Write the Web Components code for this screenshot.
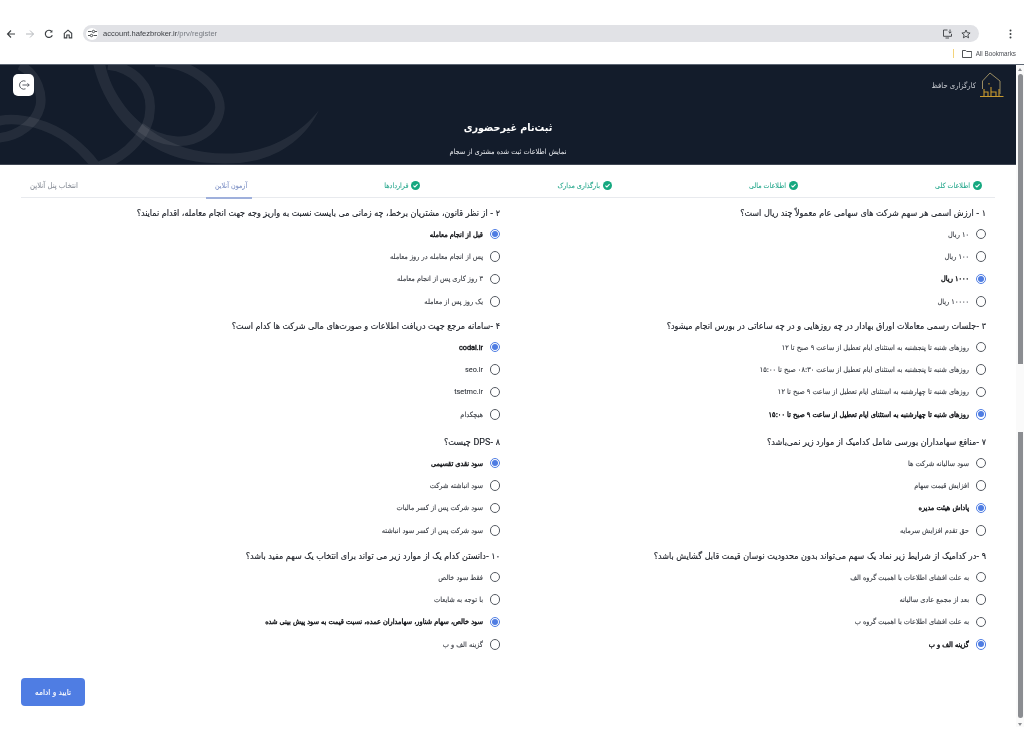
<!DOCTYPE html>
<html lang="fa"><head><meta charset="utf-8"><title>ثبت‌نام غیرحضوری</title>
<style>
html,body{margin:0;padding:0;background:#fff;overflow:hidden}
body{width:1024px;height:747px;font-family:"DejaVu Sans Condensed","DejaVu Sans","Noto Sans",sans-serif;font-stretch:condensed;color:#1f2533}
main{width:1016px;will-change:transform}
.l{font-family:Roboto,"Liberation Sans",sans-serif;font-stretch:normal}
</style></head><body>
<template id="t-chrome"><style>
:host{display:block;height:64px;border-bottom:1px solid #5d6673;font-family:"Liberation Sans",sans-serif;font-stretch:normal;position:relative;will-change:transform}
.row{display:flex;align-items:center;height:17px;padding:25px 0 0 6px;gap:9px}
.row svg{flex:none}
.url{flex:none;width:896px;height:17px;margin-left:1px;background:#e1e2e6;border-radius:9px;display:flex;align-items:center;box-sizing:border-box;padding:0 8px 0 3px;font-size:7.55px;color:#3a3d42}
.tune{width:12px;height:12px;border-radius:50%;background:#fff;display:flex;align-items:center;justify-content:center;margin-right:5px}
.url span i{font-style:normal;color:#777b82}
.end{margin-inline-start:auto;display:flex;gap:8px;align-items:center}
.dots{margin-left:21px}
.bm{display:flex;justify-content:flex-end;align-items:center;height:15px;margin-top:4px;padding-right:8px;font-size:6.3px;color:#4c4f55;gap:4px}
.bm b{width:1px;height:9px;background:#f3d37a;margin-right:4px}
</style>
<div class="row">
<svg width="10" height="10" viewBox="0 0 10 10" fill="none" stroke="#3c4043" stroke-width="1.1"><path d="M9 5H1.5M5 1.5 1.5 5 5 8.5"/></svg>
<svg width="10" height="10" viewBox="0 0 10 10" fill="none" stroke="#b4b7bb" stroke-width="1"><path d="M1 5h7.5M5 1.5 8.5 5 5 8.5"/></svg>
<svg width="10" height="10" viewBox="0 0 10 10" fill="none" stroke="#3c4043" stroke-width="1.2"><path d="M8.3 6.2A3.6 3.6 0 1 1 7.6 2.4"/><path d="M8.4.9v2.6H5.8" fill="#3c4043" stroke="none"/></svg>
<svg width="10" height="10" viewBox="0 0 10 10" fill="none" stroke="#3c4043" stroke-width="1.1"><path d="M1.3 4.3 5 1.2l3.7 3.1v4.6H6.2V6H3.8v2.9H1.3z"/></svg>
<div class="url"><div class="tune"><svg width="9" height="9" viewBox="0 0 9 9" fill="none" stroke="#3c4043" stroke-width=".9"><path d="M0 2.5h3.6M5.5 6.5H9"/><circle cx="5.5" cy="2.5" r="1.2"/><circle cx="3.5" cy="6.5" r="1.2"/><path d="M7 2.5h2M0 6.5h2"/></svg></div>
<span>account.hafezbroker.ir<i>/prv/register</i></span>
<div class="end">
<svg width="11" height="11" viewBox="0 0 11 11" fill="none" stroke="#3c4043" stroke-width=".9"><path d="M9.5 5.8V8.3H1.5V2h4M3.5 10h3.5"/><path d="M8 1.5v3.6M6.6 3.8 8 5.2l1.4-1.4"/></svg>
<svg width="10" height="10" viewBox="0 0 10 10" fill="none" stroke="#3c4043" stroke-width=".9"><path d="M5 1l1.2 2.7 2.9.3-2.2 1.9.7 2.9L5 7.3 2.4 8.8l.7-2.9L.9 4l2.9-.3z"/></svg>
</div></div>
<svg class="dots" width="3" height="10" viewBox="0 0 3 10" fill="#3c4043"><circle cx="1.5" cy="1.5" r="1"/><circle cx="1.5" cy="5" r="1"/><circle cx="1.5" cy="8.5" r="1"/></svg>
</div>
<div class="bm"><b></b><svg width="10" height="8" viewBox="0 0 10 8" fill="none" stroke="#3c4043" stroke-width=".9"><path d="M.5.5h3.2l1 1h5v6H.5z"/></svg><span>All Bookmarks</span></div>
</template>

<template id="t-header"><style>
:host{display:block;height:99px;background:#131c2b;position:relative;overflow:hidden;color:#fff;border-bottom:1px solid #3f4653}
svg.bg{position:absolute;left:0;top:0}
.top{display:flex;justify-content:space-between;align-items:flex-start;padding:7px 12px 0 13px;position:relative;height:28px}
.brand{display:flex;align-items:center;gap:3px;font-size:7.6px;color:#c9ccd2;direction:rtl}
.out{width:21px;height:22px;border-radius:5px;background:#fff;display:flex;align-items:center;justify-content:center;margin-top:2px}
.mid{position:relative;text-align:center;direction:rtl}
h1{margin:18px 0 0;font-size:10.7px;font-weight:700;line-height:20px}
p{margin:8px 0 0;font-size:7.3px;line-height:12px;color:#eceef2}
</style>
<svg class="bg" width="1016" height="99" viewBox="0 65 1016 99" fill="none" stroke="#fff" stroke-opacity=".075" stroke-width="9.5">
<path d="M93 63C100 95 120 125 143 140 170 160 200 165 240 163 275 160 305 140 319 110 305 128 280 148 240 153 205 156 175 148 150 130 128 115 110 90 105 63Z" fill="#fff" fill-opacity=".075" stroke="none"/>
<path d="M108 65C135 68 152 88 150 110 150 130 130 155 100 166"/>
<path d="M155 62C190 62 220 85 220 108 218 130 195 143 175 141 163 140 150 135 140 127"/>
<path d="M20 65C38 75 43 95 40 107 36 122 20 136-2 138"/>
<path d="M-2 121C20 116 50 125 70 140 82 149 90 158 96 166"/>
</svg>
<div class="top"><div class="out"><svg width="12" height="12" viewBox="0 0 12 12" fill="none" stroke="#4a4f57" stroke-width=".9"><path d="M7.5 2.2A4.2 4.2 0 1 0 7.5 9.8M4.5 6H11.2M9.5 4.3 11.2 6 9.5 7.7"/></svg></div>
<div class="brand"><svg width="25" height="26" viewBox="0 0 25 26" fill="none" stroke="#c99a2e" stroke-width="1"><path d="M3.5 17V9L11 1 21 9V22" stroke="#9a8c62"/><path d="M1 24.5H24.5M5 24V17M5 20H9V24M12 24V15M12 20H17V24M20 24V17M10 11v1.5" stroke-width="1.1"/></svg><span>کارگزاری حافظ</span></div></div>
<div class="mid"><h1>ثبت‌نام غیرحضوری</h1><p>نمایش اطلاعات ثبت شده مشتری از سجام</p></div>
</template>

<template id="t-tabs"><style>
:host{display:flex;direction:rtl;justify-content:space-between;margin:0 21px 0 21px;padding:0 8px 0 0;border-bottom:1px solid #e8eaee;height:33px;box-sizing:border-box}
</style><slot></slot></template>

<template id="t-tab"><style>
:host{display:flex;align-items:center;gap:3px;font-size:7.1px;color:#26a78c;position:relative;padding:8px 5px 0 9px;height:33px;box-sizing:border-box;white-space:nowrap;-webkit-text-stroke:.08px currentColor}
:host([state=active]){color:#7b8fc4}
:host([state=active])::after{content:"";position:absolute;left:0;right:0;bottom:-1px;height:2px;background:#9fb0dc}
:host([state=idle]){color:#8a8f98;font-size:7.7px}
svg{flex:none}
</style><svg id="i" width="9" height="9" viewBox="0 0 9 9"><circle cx="4.5" cy="4.5" r="4.5" fill="#16a880"/><path d="M2.4 4.6 3.9 6 6.6 3.2" fill="none" stroke="#fff" stroke-width="1.1"/></svg><slot></slot></template>

<template id="t-grid"><style>
:host{display:grid;direction:rtl;grid-template-columns:486px 486px;grid-template-rows:113px 116px 114px auto;padding:9px 30px 0 0;width:1016px;box-sizing:border-box;justify-content:start}
</style><slot></slot></template>

<template id="t-q"><style>
:host{display:block;direction:rtl}
.t{font-size:8.95px;line-height:13px;color:#1b1f27;font-weight:400;margin-bottom:3px;white-space:nowrap;-webkit-text-stroke:.15px #1b1f27}
</style><div class="t"><slot name="t"></slot></div><slot></slot></template>

<template id="t-o"><style>
:host{display:flex;align-items:center;gap:6.5px;height:22.4px;font-size:7.3px;color:#34383f;white-space:nowrap;direction:rtl;-webkit-text-stroke:.1px #34383f}
:host([on]){font-size:7.3px;color:#101216;-webkit-text-stroke:.38px #101216}
.r{width:8.5px;height:8.5px;border:1px solid #555a62;border-radius:50%;flex:none;position:relative;background:#fff}
:host([on]) .r{border-color:#4f7de3}
:host([on]) .r::after{content:"";position:absolute;inset:1.3px;border-radius:50%;background:#4f7de3}
</style><span class="r"></span><span><slot></slot></span></template>

<template id="t-btn"><style>
:host{display:flex;align-items:center;justify-content:center;width:64px;height:28px;border-radius:4px;background:#4f7de3;color:#fff;font-size:8.2px;direction:rtl;margin:22px 0 0 21px;-webkit-text-stroke:.12px #fff}
</style><slot></slot></template>

<template id="t-sb"><style>
:host{display:block;position:absolute;left:1016px;top:65px;width:8px;height:662px;background:#fafafa}
i{position:absolute;left:1.5px;width:5.5px;background:#8b8d91;display:block}
.a{top:9px;height:290px;border-radius:3px 3px 0 0}
.b{top:366.5px;height:286px;border-radius:0 0 3px 3px}
.u,.d{position:absolute;left:2px;width:0;height:0;border-left:2px solid transparent;border-right:2px solid transparent}
.u{top:3px;border-bottom:3px solid #8b8d91}.d{bottom:1px;border-top:3px solid #8b8d91}
</style><span class="u"></span><i class="a"></i><i class="b"></i><span class="d"></span></template>

<hf-chrome></hf-chrome>
<main>
<hf-header></hf-header>
<hf-tabs>
<hf-tab>اطلاعات کلی</hf-tab>
<hf-tab>اطلاعات مالی</hf-tab>
<hf-tab>بارگذاری مدارک</hf-tab>
<hf-tab>قراردادها</hf-tab>
<hf-tab state="active">آزمون آنلاین</hf-tab>
<hf-tab state="idle">انتخاب پنل آنلاین</hf-tab>
</hf-tabs>
<hf-grid>
<hf-q><span slot="t">۱ - ارزش اسمی هر سهم شرکت های سهامی عام معمولاً چند ریال است؟</span>
<hf-o>۱۰ ریال</hf-o><hf-o>۱۰۰ ریال</hf-o><hf-o on>۱۰۰۰ ریال</hf-o><hf-o>۱۰۰۰۰ ریال</hf-o></hf-q>
<hf-q><span slot="t">۲ - از نظر قانون، مشتریان برخط، چه زمانی می بایست نسبت به واریز وجه جهت انجام معامله، اقدام نمایند؟</span>
<hf-o on>قبل از انجام معامله</hf-o><hf-o>پس از انجام معامله در روز معامله</hf-o><hf-o>۳ روز کاری پس از انجام معامله</hf-o><hf-o>یک روز پس از معامله</hf-o></hf-q>
<hf-q><span slot="t">۳ -جلسات رسمی معاملات اوراق بهادار در چه روزهایی و در چه ساعاتی در بورس انجام میشود؟</span>
<hf-o>روزهای شنبه تا پنجشنبه به استثنای ایام تعطیل از ساعت ۹ صبح تا ۱۲</hf-o><hf-o>روزهای شنبه تا پنجشنبه به استثنای ایام تعطیل از ساعت ۰۸:۳۰ صبح تا ۱۵:۰۰</hf-o><hf-o>روزهای شنبه تا چهارشنبه به استثنای ایام تعطیل از ساعت ۹ صبح تا ۱۲</hf-o><hf-o on>روزهای شنبه تا چهارشنبه به استثنای ایام تعطیل از ساعت ۹ صبح تا ۱۵:۰۰</hf-o></hf-q>
<hf-q><span slot="t">۴ -سامانه مرجع جهت دریافت اطلاعات و صورت‌های مالی شرکت ها کدام است؟</span>
<hf-o on><span class="l">codal.ir</span></hf-o><hf-o><span class="l">seo.ir</span></hf-o><hf-o><span class="l">tsetmc.ir</span></hf-o><hf-o>هیچکدام</hf-o></hf-q>
<hf-q><span slot="t">۷ -منافع سهامداران بورسی شامل کدامیک از موارد زیر نمی‌باشد؟</span>
<hf-o>سود سالیانه شرکت ها</hf-o><hf-o>افزایش قیمت سهام</hf-o><hf-o on>پاداش هیئت مدیره</hf-o><hf-o>حق تقدم افزایش سرمایه</hf-o></hf-q>
<hf-q><span slot="t">۸ -<span class="l">DPS</span> چیست؟</span>
<hf-o on>سود نقدی تقسیمی</hf-o><hf-o>سود انباشته شرکت</hf-o><hf-o>سود شرکت پس از کسر مالیات</hf-o><hf-o>سود شرکت پس از کسر سود انباشته</hf-o></hf-q>
<hf-q><span slot="t">۹ -در کدامیک از شرایط زیر نماد یک سهم می‌تواند بدون محدودیت نوسان قیمت قابل گشایش باشد؟</span>
<hf-o>به علت افشای اطلاعات با اهمیت گروه الف</hf-o><hf-o>بعد از مجمع عادی سالیانه</hf-o><hf-o>به علت افشای اطلاعات با اهمیت گروه ب</hf-o><hf-o on>گزینه الف و ب</hf-o></hf-q>
<hf-q><span slot="t">۱۰ -دانستن کدام یک از موارد زیر می تواند برای انتخاب یک سهم مفید باشد؟</span>
<hf-o>فقط سود خالص</hf-o><hf-o>با توجه به شایعات</hf-o><hf-o on>سود خالص، سهام شناور، سهامداران عمده، نسبت قیمت به سود پیش بینی شده</hf-o><hf-o>گزینه الف و ب</hf-o></hf-q>
</hf-grid>
<hf-btn>تایید و ادامه</hf-btn>
</main>
<hf-sb></hf-sb>
<script>
const map={'hf-chrome':'t-chrome','hf-header':'t-header','hf-tabs':'t-tabs','hf-tab':'t-tab','hf-grid':'t-grid','hf-q':'t-q','hf-o':'t-o','hf-btn':'t-btn','hf-sb':'t-sb'};
for(const [n,id] of Object.entries(map)){
 customElements.define(n,class extends HTMLElement{
  constructor(){super();this.attachShadow({mode:'open'}).appendChild(document.getElementById(id).content.cloneNode(true));}
  connectedCallback(){ if(n==='hf-tab'&&this.hasAttribute('state')){this.shadowRoot.getElementById('i').remove();} }
 });
}
</script>
</body></html>
